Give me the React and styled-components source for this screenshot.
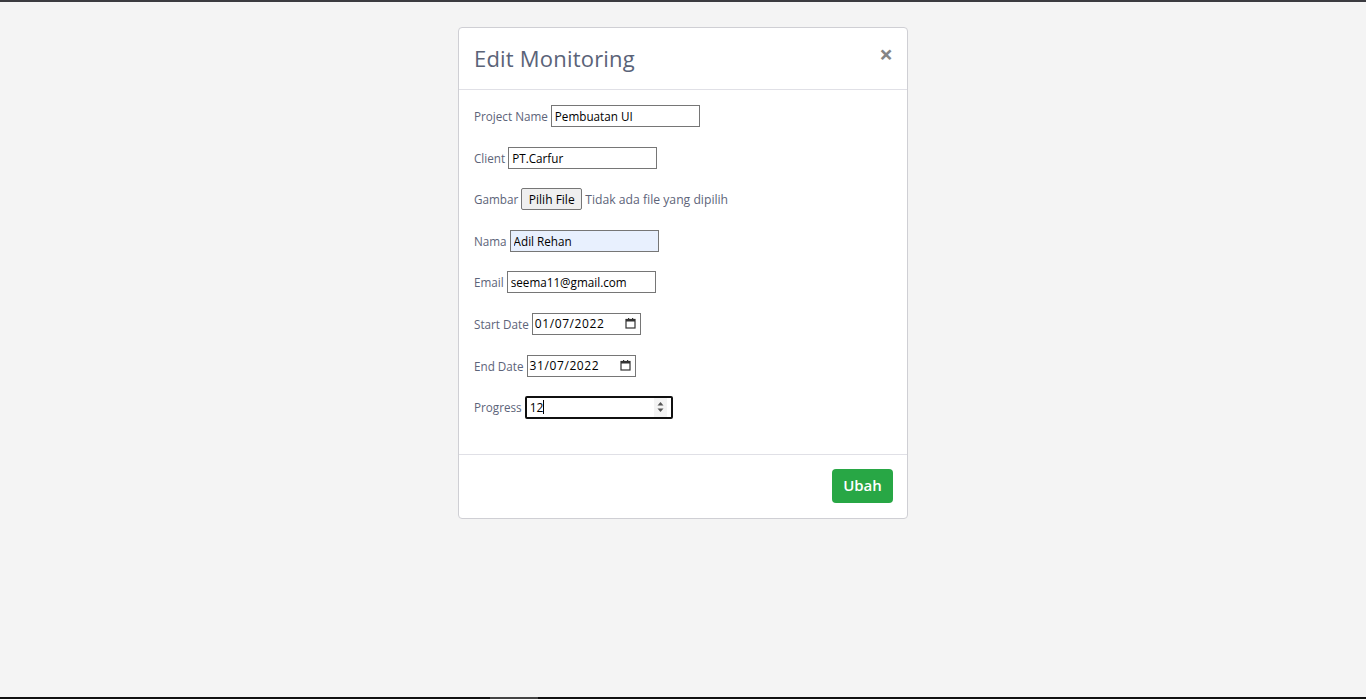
import React from 'react'
import styled, { createGlobalStyle } from 'styled-components'

const GlobalStyle = createGlobalStyle`
  html, body {
    margin: 0;
    padding: 0;
    background: #f4f4f4;
    font-family: "Open Sans", "Noto Sans", sans-serif;
  }
  * {
    box-sizing: border-box;
  }
`

function CalendarIcon() {
  return (
    <svg width="11" height="11" viewBox="0 0 11 11">
      <rect x="1" y="1.5" width="9" height="8.5" fill="none" stroke="#333" strokeWidth="1.2" />
      <rect x="1" y="1.5" width="9" height="2" fill="#333" />
      <rect x="3" y="0" width="1.2" height="2" fill="#333" />
      <rect x="7" y="0" width="1.2" height="2" fill="#333" />
    </svg>
  )
}

function SpinIcon() {
  return (
    <svg width="7" height="12" viewBox="0 0 7 12">
      <path d="M3.5 1 L6.5 4.5 L0.5 4.5 Z" fill="#555" />
      <path d="M3.5 11 L6.5 7.5 L0.5 7.5 Z" fill="#555" />
    </svg>
  )
}

function App() {
  return (
    <Page>
      <GlobalStyle />
      <TopBar />
      <Main>
        <Modal>
          <Header>
            <Title>Edit Monitoring</Title>
            <CloseButton>×</CloseButton>
          </Header>

          <Body>
            <Row>
              <Label>Project Name</Label>
              <TextInput defaultValue="Pembuatan UI" />
            </Row>

            <Row>
              <Label>Client</Label>
              <TextInput defaultValue="PT.Carfur" />
            </Row>

            <Row>
              <Label>Gambar</Label>
              <FileButton>Pilih File</FileButton>
              <FileText>Tidak ada file yang dipilih</FileText>
            </Row>

            <Row>
              <Label>Nama</Label>
              <TextInput defaultValue="Adil Rehan" autofill />
            </Row>

            <Row>
              <Label>Email</Label>
              <TextInput defaultValue="seema11@gmail.com" />
            </Row>

            <Row>
              <Label>Start Date</Label>
              <DateBox>
                <DateValue>01/07/2022</DateValue>
                <CalendarIcon />
              </DateBox>
            </Row>

            <Row>
              <Label>End Date</Label>
              <DateBox>
                <DateValue>31/07/2022</DateValue>
                <CalendarIcon />
              </DateBox>
            </Row>

            <Row>
              <Label>Progress</Label>
              <NumberBox>
                <NumberValue>12<Caret /></NumberValue>
                <Spinner>
                  <SpinIcon />
                </Spinner>
              </NumberBox>
            </Row>
          </Body>

          <Footer>
            <SubmitButton>Ubah</SubmitButton>
          </Footer>
        </Modal>
      </Main>
      <BottomBar>
        <BottomThumb />
      </BottomBar>
    </Page>
  )
}

const Page = styled.div`
  min-height: 100vh;
  display: flex;
  flex-direction: column;
`

const TopBar = styled.div`
  height: 2px;
  background: #3b3b40;
`

const Main = styled.div`
  flex: 1;
  display: flex;
  justify-content: center;
  align-items: flex-start;
  padding-top: 25px;
`

const Modal = styled.div`
  width: 450px;
  background: #fff;
  border: 1px solid #cfcfd4;
  border-radius: 4px;
  display: flex;
  flex-direction: column;
`

const Header = styled.div`
  height: 62px;
  padding: 0 15px;
  display: flex;
  align-items: center;
  justify-content: space-between;
  border-bottom: 1px solid #e0e0e6;
`

const Title = styled.h5`
  margin: 0;
  font-size: 22px;
  font-weight: 400;
  color: #5a6378;
  letter-spacing: 0.2px;
  margin-top: -2px;
`

const CloseButton = styled.span`
  font-size: 24px;
  font-weight: 700;
  color: #858585;
  line-height: 1;
  margin-top: -10px;
  margin-right: -1px;
`

const Body = styled.div`
  padding: 15px 15px 36px;
  display: flex;
  flex-direction: column;
  gap: 19.6px;
`

const Row = styled.div`
  display: flex;
  align-items: center;
  height: 22px;
  gap: 3px;
`

const Label = styled.label`
  font-size: 11.7px;
  color: #5d6479;
`

const TextInput = styled.input`
  width: 149px;
  height: 22px;
  padding: 0 3px;
  border: 1px solid #767676;
  border-radius: 0;
  font-family: inherit;
  font-size: 11.7px;
  color: #000;
  background: ${props => (props.autofill ? '#e8f0fe' : '#fff')};
  outline: none;
`

const FileButton = styled.button`
  height: 22px;
  width: 61px;
  padding: 0;
  border: 1px solid #767676;
  border-radius: 2px;
  background: #efefef;
  font-family: inherit;
  font-size: 12px;
  color: #000;
`

const FileText = styled.span`
  font-size: 12.2px;
  color: #5d6479;
`

const DateBox = styled.div`
  width: 109px;
  height: 22px;
  padding: 0 4px 0 2px;
  border: 1px solid #767676;
  display: flex;
  align-items: center;
  justify-content: space-between;
`

const DateValue = styled.span`
  font-size: 12px;
  color: #000;
  letter-spacing: 0.6px;
`

const NumberBox = styled.div`
  width: 148px;
  height: 23px;
  padding: 0 4px 0 3px;
  border: 2px solid #101010;
  border-radius: 2px;
  display: flex;
  align-items: center;
  justify-content: space-between;
`

const NumberValue = styled.span`
  font-size: 12px;
  color: #000;
  display: flex;
  align-items: center;
`

const Caret = styled.span`
  width: 1px;
  height: 14px;
  background: #000;
`

const Spinner = styled.span`
  width: 13px;
  height: 19px;
  background: #f3f3f3;
  display: flex;
  align-items: center;
  justify-content: center;
`

const Footer = styled.div`
  height: 64px;
  padding: 14px 14px 0;
  border-top: 1px solid #e0e0e6;
  display: flex;
  align-items: flex-start;
  justify-content: flex-end;
`

const SubmitButton = styled.button`
  height: 34px;
  width: 61px;
  border: none;
  border-radius: 4px;
  background: #28a745;
  color: #fff;
  font-family: inherit;
  font-size: 15px;
  font-weight: 600;
  padding: 0 0 3px;
`

const BottomBar = styled.div`
  height: 2px;
  background: #111;
  display: flex;
  padding-left: 490px;
`

const BottomThumb = styled.div`
  width: 48px;
  background: #444;
`

export default App
